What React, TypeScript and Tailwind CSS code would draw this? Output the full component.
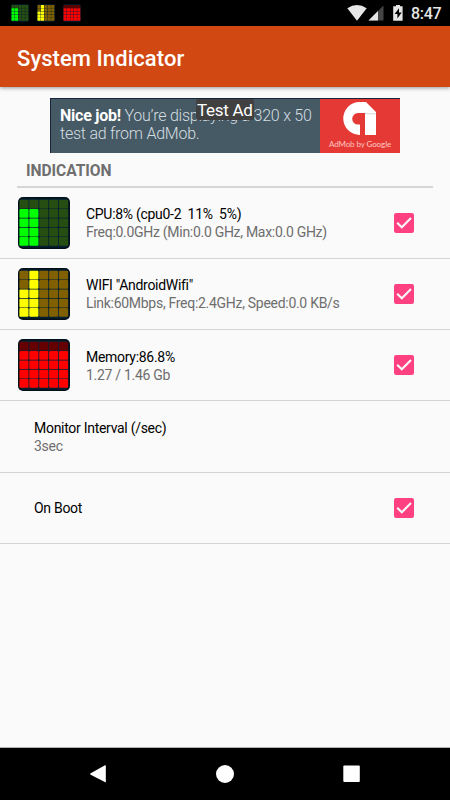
import React from "react";

type Meter = {
  on: string;
  off: string;
  levels: number[];
};

const cpu: Meter = { on: "#00ff00", off: "#264d12", levels: [4, 4, 0, 0, 0] };
const wifi: Meter = { on: "#ffff00", off: "#806000", levels: [3, 5, 0, 0, 0] };
const memory: Meter = { on: "#ff0000", off: "#660000", levels: [4, 4, 4, 4, 4] };

function MeterIcon({ meter, className }: { meter: Meter; className: string }) {
  return (
    <svg viewBox="0 0 52 52" className={className}>
      <rect width="52" height="52" rx="5" fill="#02101c" />
      <rect x="1.5" y="1.5" width="49" height="49" rx="4" fill="#042032" />
      {meter.levels.map((level, col) =>
        [0, 1, 2, 3, 4].map((row) => (
          <rect
            key={`${col}-${row}`}
            x={1.4 + col * 9.9}
            y={2.8 + row * 9.3}
            width="9.1"
            height="8.7"
            rx="1"
            fill={5 - row <= level ? meter.on : meter.off}
          />
        )),
      )}
    </svg>
  );
}

function Checkbox() {
  return (
    <svg viewBox="0 0 20 20" className="mr-9 size-5 shrink-0">
      <rect width="20" height="20" rx="2.2" fill="#ff4081" />
      <path d="M3.2 9.8 7.8 14.2 17 5" fill="none" stroke="#fafafa" strokeWidth="2.1" />
    </svg>
  );
}

type RowProps = {
  meter?: Meter;
  title: string;
  detail?: string;
  checked?: boolean;
  className: string;
  textClassName?: string;
};

function Row({ meter, title, detail, checked, className, textClassName = "" }: RowProps) {
  return (
    <div className={`flex items-center border-b border-[#d4d4d4] ${className}`}>
      {meter ? <MeterIcon meter={meter} className="mr-4 ml-[18px] size-[52px] shrink-0" /> : <div className="w-[34px]" />}
      <div className={`flex-1 text-[14px] leading-[18px] tracking-[-0.29px] whitespace-pre ${textClassName}`}>
        <div className="text-black">{title}</div>
        {detail && <div className="text-[#6e6e6e]">{detail}</div>}
      </div>
      {checked && <Checkbox />}
    </div>
  );
}

function StatusBar() {
  return (
    <div className="flex h-[26px] shrink-0 items-center bg-black pl-[11px] text-[#e6e6e6]">
      <MeterIcon meter={cpu} className="mr-2 size-[18px]" />
      <MeterIcon meter={wifi} className="mr-2 size-[18px]" />
      <MeterIcon meter={memory} className="size-[18px]" />
      <svg viewBox="0 0 60 26" className="ml-auto h-[26px] w-[60px]" fill="currentColor">
        <path d="M.3 8.2Q10 1.8 19.7 8.2L10 20.7Z" />
        <path d="M36.5 5.5v15h-15Z" fillOpacity=".3" />
        <path d="M31 11v9.5h-9.5Z" />
        <path
          fillRule="evenodd"
          d="M46.2 6.2H49V5h4v1.2h2.6v14.6h-9.4ZM52 8.2l-4.4 5.8h2.8v4.6l4.3-6H52Z"
        />
      </svg>
      <span className="ml-1 w-[39px] pt-px text-[16px] leading-[26px] font-medium tracking-[-0.3px]">8:47</span>
    </div>
  );
}

function AdBanner() {
  return (
    <div className="relative ml-[50px] flex h-[55px] w-[350px] border-t border-l border-[#17253b] bg-[#455a64]">
      <div className="w-[269px] shrink-0 pt-[8px] pl-[9px] text-[16px] leading-[18px] font-light tracking-[-0.24px] whitespace-nowrap text-[#d5dde1]">
        <div>
          <b className="font-bold text-white">Nice job!</b> You’re displaying a 320 x 50
        </div>
        <div>test ad from AdMob.</div>
      </div>
      <div className="flex w-20 flex-col items-center bg-[#e53935]">
        <svg viewBox="0 0 34 35" className="mt-[2px] h-[35px] w-[34px]">
          <path
            d="M16.5 1H23L33 11V34H22V23.5H17V34A16.5 16.5 0 0 1 16.5 1Z"
            fill="#fff"
          />
          <path d="M22 12h-7a5.8 5.8 0 0 0 0 11.6h7Z" fill="#e53935" />
          <path d="M17 23h5v12h-5Z" fill="#e53935" />
          <path d="M22 12h11v1.3h-11Z" fill="#dedede" />
        </svg>
        <div className="mt-[3px] font-[Lato,sans-serif] text-[8px] leading-[11px] tracking-[-0.1px] whitespace-nowrap text-[#ffc4c0]">
          AdMob by <span className="font-medium">Google</span>
        </div>
      </div>
      <div className="absolute top-0 left-[145px] h-[21px] w-[58px] rounded-[2px] bg-[#404040] pl-[1px] text-[17px] leading-[23px] tracking-[-0.3px] whitespace-nowrap text-white">
        Test Ad
      </div>
    </div>
  );
}

function NavBar() {
  return (
    <div className="mt-auto h-[53px] shrink-0 border-t border-[#b0b0b0] bg-black">
      <svg viewBox="0 0 450 52" className="h-[52px] w-[450px]" fill="#fff">
        <path d="M105.8 17.5v17L90.7 26.8q-1.4-.8 0-1.6L105 17.2Z" />
        <circle cx="225" cy="26" r="9" />
        <rect x="343.3" y="17.5" width="16.5" height="16.5" rx="1" />
      </svg>
    </div>
  );
}

export default function App() {
  return (
    <div className="flex h-[800px] w-[450px] flex-col overflow-hidden bg-[#fafafa] font-[Roboto,sans-serif]">
      <StatusBar />
      <header className="h-[61px] shrink-0 bg-[#d24813] pl-[17px] text-[22px] leading-[65px] font-medium tracking-[0.06px] text-white shadow-[0_1px_4px_rgba(0,0,0,0.4)]">
        System Indicator
      </header>
      <div className="pt-[11px]">
        <AdBanner />
      </div>
      <div className="mx-[17px] h-[35px] border-b-2 border-[#d6d6d6] pt-[7px] pl-[9px] text-[15.6px] leading-[23px] font-bold tracking-[-0.05px] text-[#6e6e6e]">
        INDICATION
      </div>
      <Row className="h-[71px]" meter={cpu} title="CPU:8% (cpu0-2  11%  5%)" detail="Freq:0.0GHz (Min:0.0 GHz, Max:0.0 GHz)" checked />
      <Row className="h-[71px]" meter={wifi} title={'WIFI "AndroidWifi"'} detail="Link:60Mbps, Freq:2.4GHz, Speed:0.0 KB/s" checked />
      <Row className="h-[71px]" textClassName="pt-px" meter={memory} title="Memory:86.8%" detail="1.27 / 1.46 Gb" checked />
      <Row className="h-[72px]" title="Monitor Interval (/sec)" detail="3sec" />
      <Row className="h-[71px]" title="On Boot" checked />
      <NavBar />
    </div>
  );
}
